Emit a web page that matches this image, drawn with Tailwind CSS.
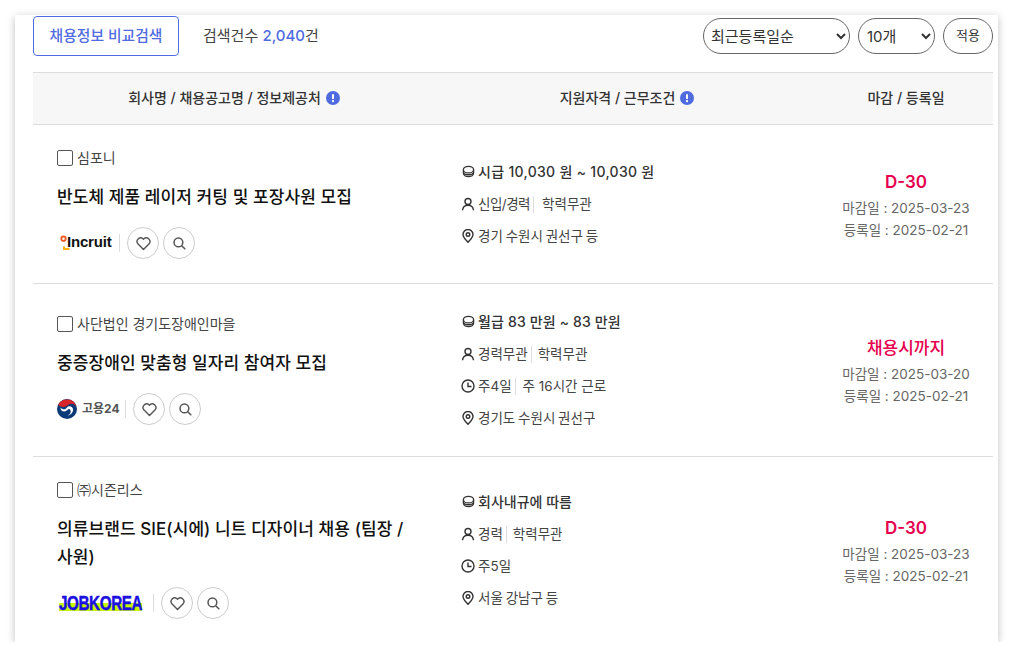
<!DOCTYPE html>
<html lang="ko">
<head>
<meta charset="utf-8">
<script src="https://cdn.jsdelivr.net/npm/@tailwindcss/browser@4"></script>
</head>
<body class="bg-white overflow-hidden font-['Inter','Noto_Sans_CJK_KR',sans-serif] text-[#333]">
<div class="ml-[15px] mt-[15px] w-[983px] h-[627px] bg-white shadow-[0_2px_8px_rgba(0,0,0,0.25)] pl-[18px] pr-[5px] overflow-hidden">
  <div class="flex items-center h-[40px] mt-px">
    <button class="w-[146px] h-[40px] border border-[#4f6bdf] rounded text-[#4f6bdf] text-[14.8px] font-medium bg-white">채용정보 비교검색</button>
    <div class="ml-6 text-[15px] text-[#444]">검색건수 <span class="text-[#4f6bdf] font-medium">2,040</span>건</div>
    <select class="ml-auto w-[147px] h-[36px] border border-[#666] rounded-full px-[3px] text-[15px] text-[#333] bg-white"><option>최근등록일순</option></select>
    <select class="ml-2 w-[77px] h-[36px] border border-[#666] rounded-full px-[4px] text-[15px] text-[#333] bg-white"><option>10개</option></select>
    <button class="ml-2 w-[50px] h-[36px] border border-[#666] rounded-full text-[13px] text-[#333] bg-white">적용</button>
  </div>
  <div class="flex mt-[16px] h-[53px] items-center bg-[#f7f7f7] border-y border-[#ddd] text-[14px] font-medium text-[#333] pb-[2px]">
    <div class="w-[413px] flex justify-center items-center gap-[5px] pr-[11px]">회사명 / 채용공고명 / 정보제공처
      <svg class="w-[14px] h-[14px]" viewBox="0 0 14 14"><circle cx="7" cy="7" r="7" fill="#4f6bdf"/><rect x="6" y="3" width="2" height="5.2" rx="1" fill="#fff"/><circle cx="7" cy="10.2" r="1.1" fill="#fff"/></svg>
    </div>
    <div class="w-[365px] flex justify-center items-center gap-[5px] pr-[3px]">지원자격 / 근무조건
      <svg class="w-[14px] h-[14px]" viewBox="0 0 14 14"><circle cx="7" cy="7" r="7" fill="#4f6bdf"/><rect x="6" y="3" width="2" height="5.2" rx="1" fill="#fff"/><circle cx="7" cy="10.2" r="1.1" fill="#fff"/></svg>
    </div>
    <div class="flex-1 text-center pl-[8px]">마감 / 등록일</div>
  </div>

  <!-- row 1 -->
  <div class="flex h-[159px] border-b border-[#ddd]">
    <div class="w-[428px] pl-[24px] pr-[50px] pt-[24px]">
      <label class="flex items-center gap-[4px] h-[18px] text-[14px] text-[#444]"><span class="w-[16px] h-[16px] border border-[#555] rounded-[2px] bg-white"></span><span class="pb-[2px]">심포니</span></label>
      <div class="mt-[16px] text-[17px] leading-[28px] font-medium text-[#111] tracking-[0.08px] break-keep">반도체 제품 레이저 커팅 및 포장사원 모집</div>
      <div class="flex items-center mt-[16px] h-[32px]">
        <div class="w-[62px] flex items-center h-[32px]">
          <svg class="ml-[3px] w-[7px] h-[16px] shrink-0 overflow-visible" viewBox="0 0 7 16"><circle cx="3.5" cy="3.7" r="2.2" fill="#fff" stroke="#f05a22" stroke-width="1.8"/><path d="M4 11.500v2.500h5.500" fill="none" stroke="#fbb117" stroke-width="2"/></svg>
          <span class="text-[15px] leading-none pb-[3px] font-bold text-[#111] font-['Liberation_Sans',sans-serif] tracking-[-0.2px]">Incruit</span>
        </div>
        <span class="w-px h-[18px] bg-[#ddd]"></span>
        <button class="ml-[7px] w-[32px] h-[32px] rounded-full border border-[#ccc] flex items-center justify-center"><svg class="w-[17px] h-[17px]" viewBox="0 0 24 24" fill="none" stroke="#555" stroke-width="2"><path d="M12 20.500l-8-8a5.200 5.200 0 0 1 7.400-7.200l.6.7.6-.7a5.200 5.200 0 0 1 7.400 7.200z" stroke-linejoin="round"/></svg></button>
        <button class="ml-[4px] w-[32px] h-[32px] rounded-full border border-[#ccc] flex items-center justify-center"><svg class="w-[14px] h-[14px]" viewBox="0 0 24 24" fill="none" stroke="#555" stroke-width="2.600"><circle cx="11" cy="11" r="7.500"/><path d="M17 17l5 5" stroke-linecap="round"/></svg></button>
      </div>
    </div>
    <div class="w-[332px] pt-[31px] text-[13.5px] text-[#444]">
      <div class="flex items-center gap-[3px] h-[32px] pb-[2px] text-[14px] tracking-[0.3px] font-medium text-[#333]"><svg class="w-[13px] h-[13px] ml-px" viewBox="0 0 14 14" fill="none" stroke="#333" stroke-width="1.400"><ellipse cx="7" cy="5" rx="5.500" ry="3.500"/><path d="M1.500 5v4c0 2 2.500 3.500 5.500 3.500s5.500-1.500 5.500-3.500V5M1.500 8.500c1 1.500 3 2 5.500 2s4.500-.5 5.500-2"/></svg>시급 10,030 원 ~ 10,030 원</div>
      <div class="flex items-center gap-[3px] h-[32px]"><svg class="w-[14px] h-[14px]" viewBox="0 0 14 14" fill="none" stroke="#333" stroke-width="1.400"><circle cx="7" cy="4.500" r="3"/><path d="M1.500 13.300c.3-3 2.500-5 5.500-5s5.200 2 5.500 5"/></svg><span class="tracking-[-0.5px]">신입/경력</span><span class="w-px h-[17px] bg-[#ddd] mr-[5px]"></span>학력무관</div>
      <div class="flex items-center gap-[3px] h-[32px] [word-spacing:-1px]"><svg class="w-[14px] h-[14px]" viewBox="0 0 14 14" fill="none" stroke="#333" stroke-width="1.400"><path d="M7 13.300C4.500 10.500 2 8.300 2 5.500a5 5 0 0 1 10 0c0 2.800-2.500 5-5 7.800z"/><circle cx="7" cy="5.500" r="1.800"/></svg>경기 수원시 권선구 등</div>
    </div>
    <div class="flex-1 flex flex-col items-center pt-[45px] pl-[26px] text-[13.500px] leading-[22px] text-[#666]">
      <div class="text-[17px] leading-[24px] font-semibold text-[#e6004d] mb-[3px]">D-30</div>
      <div>마감일 : 2025-03-23</div>
      <div>등록일 : 2025-02-21</div>
    </div>
  </div>

  <!-- row 2 -->
  <div class="flex h-[173px] border-b border-[#ddd]">
    <div class="w-[428px] pl-[24px] pr-[50px] pt-[31px]">
      <label class="flex items-center gap-[4px] h-[18px] text-[14px] text-[#444]"><span class="w-[16px] h-[16px] border border-[#555] rounded-[2px] bg-white"></span><span class="pb-[2px]">사단법인 경기도장애인마을</span></label>
      <div class="mt-[16px] text-[17px] leading-[28px] font-medium text-[#111] tracking-[0.08px] break-keep">중증장애인 맞춤형 일자리 참여자 모집</div>
      <div class="flex items-center mt-[16px] h-[32px]">
        <div class="w-[68px] flex items-center gap-[5px] h-[32px]">
          <svg class="w-[20px] h-[20px] shrink-0" viewBox="0 0 20 20"><circle cx="10" cy="10" r="10" fill="#0b3a78"/><path d="M1.200 6A9.700 9.700 0 0 1 19.500 8.500C18 4.500 13.500 4 11 6 8.500 8.500 4 8.500 1.200 6z" fill="#d8232a"/><path d="M3.500 8.500C5 10.500 8 11 9.500 9 11 6.500 15 6.500 16 10 16.500 13 14 16 10.500 16.500 14.500 15 14.500 10.500 12 10 10.500 9.800 10 12.500 7.500 12.500 5 12.500 3.500 11 3.500 8.500z" fill="#fff"/></svg>
          <span class="text-[12px] font-bold text-[#555] whitespace-nowrap">고용24</span>
        </div>
        <span class="w-px h-[18px] bg-[#ddd]"></span>
        <button class="ml-[7px] w-[32px] h-[32px] rounded-full border border-[#ccc] flex items-center justify-center"><svg class="w-[17px] h-[17px]" viewBox="0 0 24 24" fill="none" stroke="#555" stroke-width="2"><path d="M12 20.500l-8-8a5.200 5.200 0 0 1 7.400-7.200l.6.7.6-.7a5.200 5.200 0 0 1 7.400 7.200z" stroke-linejoin="round"/></svg></button>
        <button class="ml-[4px] w-[32px] h-[32px] rounded-full border border-[#ccc] flex items-center justify-center"><svg class="w-[14px] h-[14px]" viewBox="0 0 24 24" fill="none" stroke="#555" stroke-width="2.600"><circle cx="11" cy="11" r="7.500"/><path d="M17 17l5 5" stroke-linecap="round"/></svg></button>
      </div>
    </div>
    <div class="w-[332px] pt-[22px] text-[13.5px] text-[#444]">
      <div class="flex items-center gap-[3px] h-[32px] pb-[2px] text-[14px] tracking-[0.15px] font-medium text-[#333]"><svg class="w-[13px] h-[13px] ml-px" viewBox="0 0 14 14" fill="none" stroke="#333" stroke-width="1.400"><ellipse cx="7" cy="5" rx="5.500" ry="3.500"/><path d="M1.500 5v4c0 2 2.500 3.500 5.500 3.500s5.500-1.500 5.500-3.500V5M1.500 8.500c1 1.500 3 2 5.500 2s4.500-.5 5.500-2"/></svg>월급 83 만원 ~ 83 만원</div>
      <div class="flex items-center gap-[3px] h-[32px]"><svg class="w-[14px] h-[14px]" viewBox="0 0 14 14" fill="none" stroke="#333" stroke-width="1.400"><circle cx="7" cy="4.500" r="3"/><path d="M1.500 13.300c.3-3 2.500-5 5.500-5s5.200 2 5.500 5"/></svg>경력무관<span class="w-px h-[17px] bg-[#ddd] mr-[3px]"></span>학력무관</div>
      <div class="flex items-center gap-[3px] h-[32px]"><svg class="w-[14px] h-[14px]" viewBox="0 0 14 14" fill="none" stroke="#333" stroke-width="1.400"><circle cx="7" cy="7" r="6"/><path d="M7 3.500V7.500H10.500"/></svg>주4일<span class="w-px h-[17px] bg-[#ddd] mr-[4px]"></span>주 16시간 근로</div>
      <div class="flex items-center gap-[3px] h-[32px] [word-spacing:-1px]"><svg class="w-[14px] h-[14px]" viewBox="0 0 14 14" fill="none" stroke="#333" stroke-width="1.400"><path d="M7 13.300C4.500 10.500 2 8.300 2 5.500a5 5 0 0 1 10 0c0 2.800-2.500 5-5 7.800z"/><circle cx="7" cy="5.500" r="1.800"/></svg>경기도 수원시 권선구</div>
    </div>
    <div class="flex-1 flex flex-col items-center pt-[52px] pl-[26px] text-[13.500px] leading-[22px] text-[#666]">
      <div class="text-[17px] leading-[24px] font-medium text-[#e6004d] mb-[3px]">채용시까지</div>
      <div>마감일 : 2025-03-20</div>
      <div>등록일 : 2025-02-21</div>
    </div>
  </div>

  <!-- row 3 -->
  <div class="flex">
    <div class="w-[428px] pl-[24px] pr-[36px] pt-[24px]">
      <label class="flex items-center gap-[4px] h-[18px] text-[14px] text-[#444]"><span class="w-[16px] h-[16px] border border-[#555] rounded-[2px] bg-white"></span><span class="pb-[2px]">㈜시즌리스</span></label>
      <div class="mt-[16px] text-[17px] leading-[28px] font-medium text-[#111] tracking-[0.08px] break-keep">의류브랜드 SIE(시에) 니트 디자이너 채용 (팀장 / 사원)</div>
      <div class="flex items-center mt-[16px] h-[32px]">
        <div class="w-[96px] h-[32px] flex items-center pl-[2px]">
          <span class="text-[20px] leading-[15px] font-bold text-[#1a10e0] [-webkit-text-stroke:0.5px_#1a10e0] font-['Liberation_Sans',sans-serif] bg-[linear-gradient(to_bottom,transparent_45%,#c8f500_45%)] tracking-[-0.5px] scale-x-[0.76] origin-left whitespace-nowrap">JOBKOREA</span>
        </div>
        <span class="w-px h-[18px] bg-[#ddd]"></span>
        <button class="ml-[7px] w-[32px] h-[32px] rounded-full border border-[#ccc] flex items-center justify-center"><svg class="w-[17px] h-[17px]" viewBox="0 0 24 24" fill="none" stroke="#555" stroke-width="2"><path d="M12 20.500l-8-8a5.200 5.200 0 0 1 7.400-7.200l.6.7.6-.7a5.200 5.200 0 0 1 7.400 7.200z" stroke-linejoin="round"/></svg></button>
        <button class="ml-[4px] w-[32px] h-[32px] rounded-full border border-[#ccc] flex items-center justify-center"><svg class="w-[14px] h-[14px]" viewBox="0 0 24 24" fill="none" stroke="#555" stroke-width="2.600"><circle cx="11" cy="11" r="7.500"/><path d="M17 17l5 5" stroke-linecap="round"/></svg></button>
      </div>
    </div>
    <div class="w-[332px] pt-[29px] text-[13.5px] text-[#444]">
      <div class="flex items-center gap-[3px] h-[32px] pb-[2px] text-[14px] font-medium text-[#333]"><svg class="w-[13px] h-[13px] ml-px" viewBox="0 0 14 14" fill="none" stroke="#333" stroke-width="1.400"><ellipse cx="7" cy="5" rx="5.500" ry="3.500"/><path d="M1.500 5v4c0 2 2.500 3.500 5.500 3.500s5.500-1.500 5.500-3.500V5M1.500 8.500c1 1.500 3 2 5.500 2s4.500-.5 5.500-2"/></svg>회사내규에 따름</div>
      <div class="flex items-center gap-[3px] h-[32px]"><svg class="w-[14px] h-[14px]" viewBox="0 0 14 14" fill="none" stroke="#333" stroke-width="1.400"><circle cx="7" cy="4.500" r="3"/><path d="M1.500 13.300c.3-3 2.500-5 5.500-5s5.200 2 5.500 5"/></svg>경력<span class="w-px h-[17px] bg-[#ddd] mr-[3px]"></span>학력무관</div>
      <div class="flex items-center gap-[3px] h-[32px]"><svg class="w-[14px] h-[14px]" viewBox="0 0 14 14" fill="none" stroke="#333" stroke-width="1.400"><circle cx="7" cy="7" r="6"/><path d="M7 3.500V7.500H10.500"/></svg>주5일</div>
      <div class="flex items-center gap-[3px] h-[32px] [word-spacing:-1px]"><svg class="w-[14px] h-[14px]" viewBox="0 0 14 14" fill="none" stroke="#333" stroke-width="1.400"><path d="M7 13.300C4.500 10.500 2 8.300 2 5.500a5 5 0 0 1 10 0c0 2.800-2.500 5-5 7.800z"/><circle cx="7" cy="5.500" r="1.800"/></svg>서울 강남구 등</div>
    </div>
    <div class="flex-1 flex flex-col items-center pt-[59px] pl-[26px] text-[13.500px] leading-[22px] text-[#666]">
      <div class="text-[17px] leading-[24px] font-semibold text-[#e6004d] mb-[3px]">D-30</div>
      <div>마감일 : 2025-03-23</div>
      <div>등록일 : 2025-02-21</div>
    </div>
  </div>
</div>
</body>
</html>
